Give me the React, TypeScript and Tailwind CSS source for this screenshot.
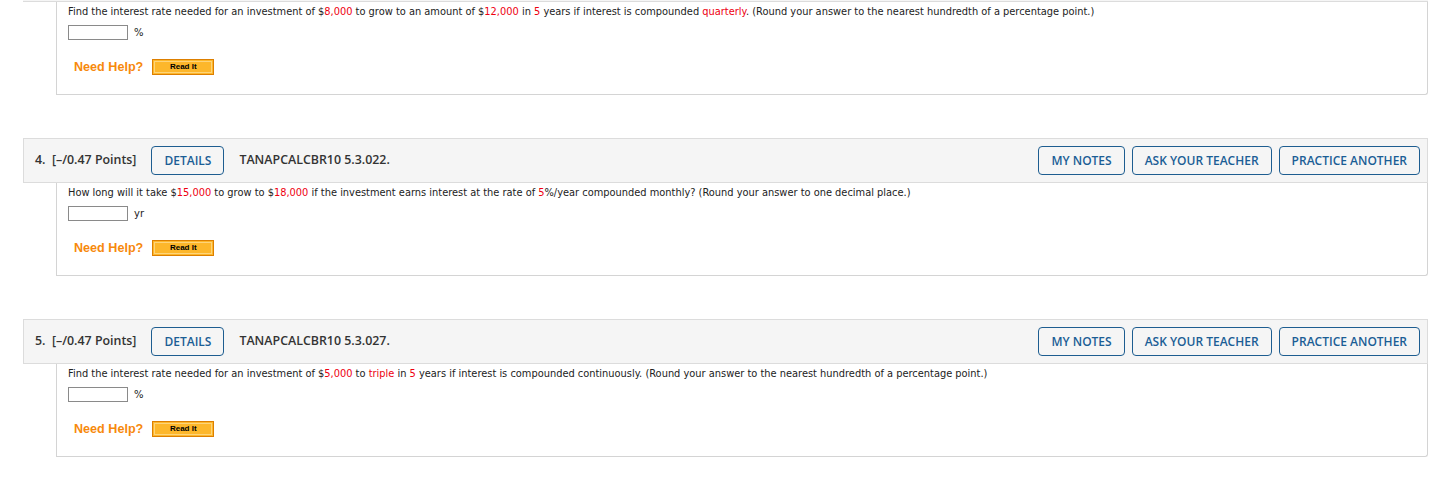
import React from 'react';

type Part = { t: string; red?: boolean };

const Red: React.FC<{ children: React.ReactNode }> = ({ children }) => (
  <span className="text-[#ee0010]">{children}</span>
);

const HeaderButton: React.FC<{ label: string }> = ({ label }) => (
  <button className="h-[29px] px-[12px] rounded-[4px] border border-[#1d5d90] bg-transparent text-[#1b5e95] text-[12px] font-semibold leading-none">
    {label}
  </button>
);

const Header: React.FC<{ num: number; code: string }> = ({ num, code }) => (
  <div className="h-[45px] flex items-center justify-between bg-[#f5f5f5] border border-[#dcdcdc] pl-[11px] pr-[7px]">
    <div className="flex items-center text-[#333] text-[12.4px] font-semibold">
      <span>
        {num}.&nbsp; [–/0.47 Points]
      </span>
      <span className="ml-[15px] flex">
        <HeaderButton label="DETAILS" />
      </span>
      <span className="ml-[15px]">{code}</span>
    </div>
    <div className="flex items-center gap-[7px]">
      <HeaderButton label="MY NOTES" />
      <HeaderButton label="ASK YOUR TEACHER" />
      <HeaderButton label="PRACTICE ANOTHER" />
    </div>
  </div>
);

const Body: React.FC<{ parts: Part[]; unit: string }> = ({ parts, unit }) => (
  <div className="ml-[33px] border-l border-r border-b border-[#d4d4d4] rounded-br-[3px] pl-[11px] pt-[4px] pb-[19px] bg-white">
    <p className="h-[12px] text-[9.85px] leading-[12px] text-[#222] font-['DejaVu_Sans',Verdana,sans-serif]">
      {parts.map((p, i) => (p.red ? <Red key={i}>{p.t}</Red> : <span key={i}>{p.t}</span>))}
    </p>
    <div className="mt-[7px] h-[15px] flex items-center gap-[6px]">
      <div className="w-[60px] h-[15px] border border-[#8a8a8a] bg-white" />
      <span className="text-[10px] leading-none text-[#222] font-['DejaVu_Sans',Verdana,sans-serif]">{unit}</span>
    </div>
    <div className="mt-[19px] ml-[6px] h-[16px] flex items-center gap-[9px]">
      <span className="text-[12.6px] leading-none font-bold text-[#f7890c] font-['Liberation_Sans',Arial,sans-serif]">
        Need Help?
      </span>
      <div className="w-[62px] h-[16px] border border-[#dd7f00] bg-[#fdb72b] p-[1px]">
        <div className="w-full h-full border border-[#fed47a] flex items-center justify-center text-[8px] leading-none font-bold text-black font-['Liberation_Sans',Arial,sans-serif]">
          Read It
        </div>
      </div>
    </div>
  </div>
);

export default function App() {
  return (
    <div className="w-[1440px] h-[483px] bg-white overflow-hidden font-['Open_Sans',sans-serif]">
      <div className="ml-[23px] w-[1405px]">
        <div className="h-[2px] bg-[#f5f5f5] border-b border-[#dcdcdc]" />
        <Body
          unit="%"
          parts={[
            { t: 'Find the interest rate needed for an investment of $' },
            { t: '8,000', red: true },
            { t: ' to grow to an amount of $' },
            { t: '12,000', red: true },
            { t: ' in ' },
            { t: '5', red: true },
            { t: ' years if interest is compounded ' },
            { t: 'quarterly', red: true },
            { t: '. (Round your answer to the nearest hundredth of a percentage point.)' },
          ]}
        />

        <div className="mt-[43px]">
          <Header num={4} code="TANAPCALCBR10 5.3.022." />
          <Body
            unit="yr"
            parts={[
              { t: 'How long will it take $' },
              { t: '15,000', red: true },
              { t: ' to grow to $' },
              { t: '18,000', red: true },
              { t: ' if the investment earns interest at the rate of ' },
              { t: '5', red: true },
              { t: '%/year compounded monthly? (Round your answer to one decimal place.)' },
            ]}
          />
        </div>

        <div className="mt-[43px]">
          <Header num={5} code="TANAPCALCBR10 5.3.027." />
          <Body
            unit="%"
            parts={[
              { t: 'Find the interest rate needed for an investment of $' },
              { t: '5,000', red: true },
              { t: ' to ' },
              { t: 'triple', red: true },
              { t: ' in ' },
              { t: '5', red: true },
              { t: ' years if interest is compounded continuously. (Round your answer to the nearest hundredth of a percentage point.)' },
            ]}
          />
        </div>
      </div>
    </div>
  );
}
